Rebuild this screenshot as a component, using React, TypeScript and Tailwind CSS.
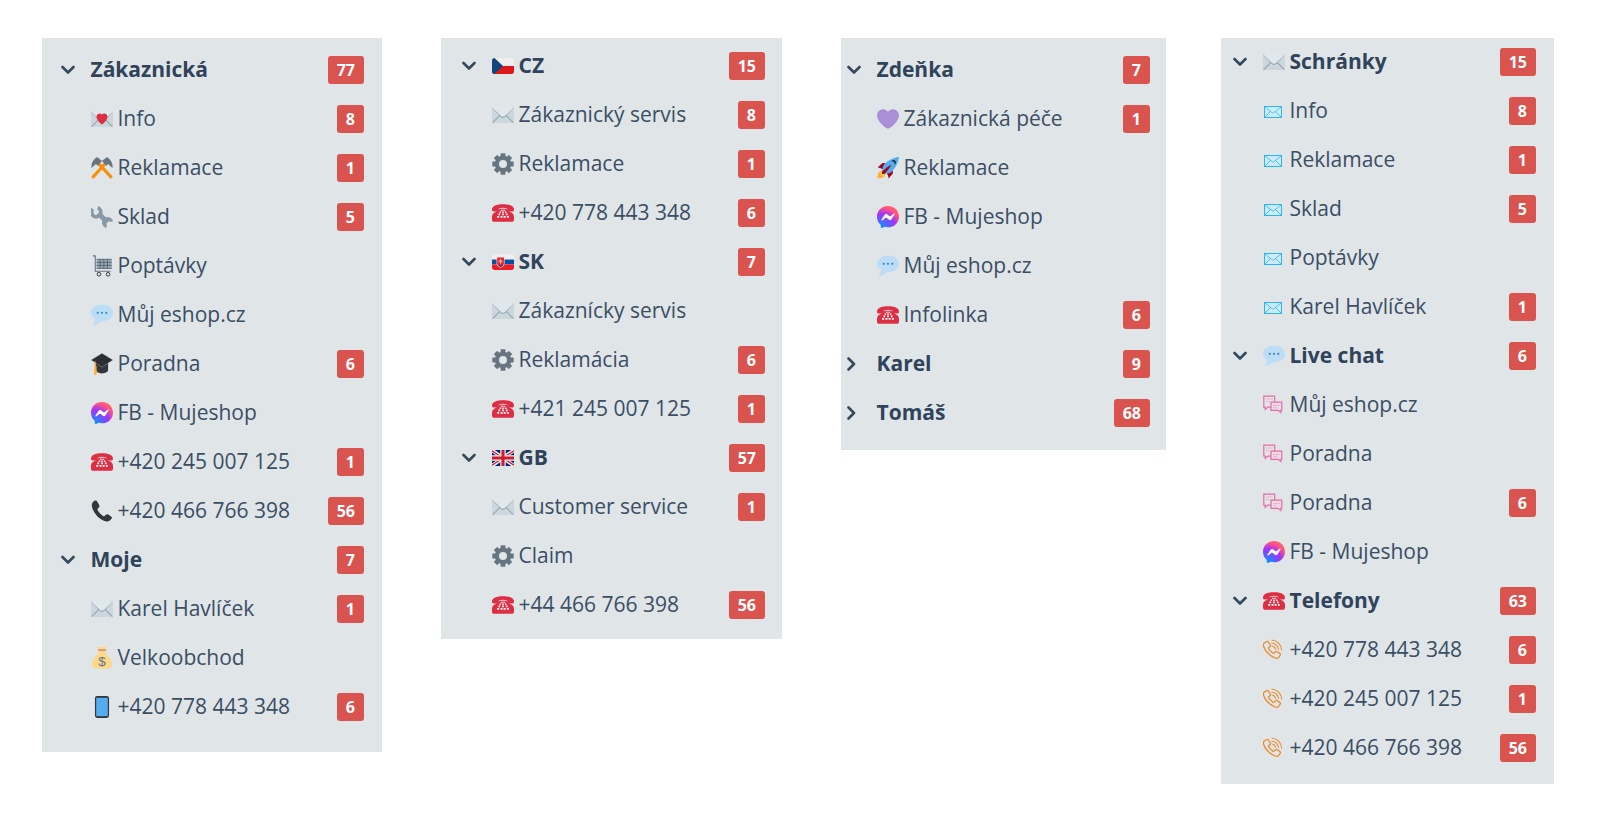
import React from "react";

const S = ({ children }: { children: React.ReactNode }) => (
  <svg viewBox="0 0 36 36" className="w-[22px] h-[22px] shrink-0 block">{children}</svg>
);

const envelopeBase = (
  <>
    <path fill="#CCD6DD" d="M36 27c0 2.2-1.8 4-4 4H4c-2.2 0-4-1.8-4-4V9c0-2.2 1.8-4 4-4h28c2.2 0 4 1.8 4 4v18z" />
    <path stroke="#99AAB5" strokeWidth="2" strokeLinecap="round" d="M13 18.5L1.5 30M23 18.5L34.5 30" />
    <path fill="#99AAB5" d="M32 5H4C2.5 5 1.2 5.9.5 7.1L14.9 21.5c1.7 1.7 4.5 1.7 6.2 0L35.5 7.1C34.8 5.9 33.5 5 32 5z" />
    <path fill="#E1E8ED" d="M32 5H4C2.5 5 1.2 5.6.5 6.1L14.9 19.5c1.7 1.7 4.5 1.7 6.2 0L35.5 6.1C34.8 5.6 33.5 5 32 5z" />
  </>
);
const Envelope = () => <S>{envelopeBase}</S>;
const LoveLetter = () => (
  <S>
    {envelopeBase}
    <path fill="#DD2E44" d="M27 14c0-2.9-2.3-5.2-5.2-5.2-1.6 0-3 .7-3.8 1.9-.9-1.2-2.3-1.9-3.8-1.9C11.3 8.8 9 11.1 9 14c0 .4.1.8.1 1.2C9.9 20 15 25 18 27c3-2 8.1-7 8.9-11.8 0-.4.1-.8.1-1.2z" />
  </S>
);
const Pick = () => (
  <S>
    <path stroke="#F4900C" strokeWidth="5" strokeLinecap="round" d="M3.500 32.500L26 8M32.500 32.500L10 8" />
    <path fill="#66757F" d="M10 0L18 6.500 11 14.500 8 11.500 1 18C-.5 10.500 3.500 4 10 0z" />
    <path fill="#66757F" d="M26 0L18 6.500 25 14.500 28 11.500 35 18C36.500 10.500 32.500 4 26 0z" />
  </S>
);
const Wrench = () => (
  <S>
    <g fill="none" stroke="#8899A6">
      <path strokeWidth="8" d="M12 12L27 27" />
      <path strokeWidth="6" d="M3 5A7.500 7.500 0 1 0 11 3" />
      <path strokeWidth="5.500" d="M33.500 25.500A6.500 6.500 0 1 0 25.500 33.500" />
    </g>
  </S>
);
const Cart = () => (
  <S>
    <path fill="none" stroke="#66757F" strokeWidth="1.800" d="M3 1.500h4v25h25" />
    <path fill="#99AAB5" d="M9 7h25v15H9z" />
    <path stroke="#4F5B66" strokeWidth="1.300" d="M9 7h25M9 12h25M9 17h25M9 22h25M15 7v15M21 7v15M27 7v15" />
    <circle cx="13" cy="31.500" r="3" fill="#E1E8ED" stroke="#31373D" strokeWidth="1.600" />
    <circle cx="28" cy="31.500" r="3" fill="#E1E8ED" stroke="#31373D" strokeWidth="1.600" />
  </S>
);
const Balloon = () => (
  <S>
    <path fill="#BBDDF5" d="M18 1C8 1 0 6.800 0 14.500c0 4 2.500 7.500 6.500 10C6.500 27.500 4 31.500 3 33c0 .9 1 1.400 2 1 5-1 9-4 11-5.900.6.100 1.400.1 2 .1 10 0 18-6 18-13.700S28 1 18 1z" />
    <circle cx="11" cy="14.500" r="1.800" fill="#3B88C3" />
    <circle cx="18" cy="14.500" r="1.800" fill="#3B88C3" />
    <circle cx="25" cy="14.500" r="1.800" fill="#3B88C3" />
  </S>
);
const Cap = () => (
  <S>
    <path fill="#31373D" d="M8 14v14c0 3 4.500 5.500 10 5.500s10-2.500 10-5.500V14H8z" />
    <path fill="#292F33" stroke="#E0E5E8" strokeWidth=".5" d="M18 .5L36 11.500 18 23 0 11.500z" />
    <path fill="none" stroke="#F4900C" strokeWidth="1.500" d="M6.500 13l.5 8" />
    <path fill="#FFAC33" d="M5.500 21h3.500l.5 13-2.500 2-2-1z" />
  </S>
);
const Messenger = ({ id }: { id: string }) => (
  <S>
    <defs>
      <radialGradient id={id} cx="0.2" cy="1" r="1.150">
        <stop offset="0" stopColor="#0099FF" />
        <stop offset="0.55" stopColor="#A033FF" />
        <stop offset="0.8" stopColor="#FF5280" />
        <stop offset="1" stopColor="#FF7061" />
      </radialGradient>
    </defs>
    <path fill={`url(#${id})`} d="M18 0C7.900 0 0 7.400 0 17.400c0 5.200 2.100 9.700 5.600 12.800.3.300.5.700.5 1.100l.1 3.200c0 1 1.100 1.700 2 1.300l3.600-1.600c.3-.1.700-.2 1-.1 1.600.5 3.400.7 5.200.7 10.100 0 18-7.400 18-17.400S28.100 0 18 0z" />
    <path fill="#fff" d="M7.200 22.600l5.300-8.400c.8-1.300 2.600-1.700 3.900-.7l4.200 3.200c.4.300.9.300 1.300 0l5.700-4.300c.8-.6 1.800.3 1.300 1.100l-5.300 8.400c-.8 1.300-2.600 1.700-3.900.7l-4.200-3.200c-.4-.3-.9-.3-1.300 0l-5.700 4.300c-.8.600-1.800-.3-1.300-1.100z" />
  </S>
);
const Telephone = () => (
  <S>
    <path fill="#DD2E44" d="M18 3.500C8 3.500 0 6 0 12.500c0 2 1 3 3 3h5c2 0 3-1 3-2.500v-2.500c4-1.500 10-1.500 14 0V13c0 1.500 1 2.500 3 2.500h5c2 0 3-1 3-3 0-6.500-8-9-18-9z" />
    <path fill="#DD2E44" d="M12 11h12c1 2 3 4 6 5.500 3 1.500 6 4 6 7.500v5c0 2-1.500 3.500-3.500 3.500h-29C1.500 32.500 0 31 0 29v-5c0-3.500 3-6 6-7.500 3-1.500 5-3.500 6-5.500z" />
    <path fill="#fff" d="M14.500 12.500h2v2h-2zM17 12.500h2v2h-2zM19.500 12.500h2v2h-2zM12.500 15.500h2.400v2.300h-2.400zM16.800 15.500h2.400v2.300h-2.400zM21.100 15.500h2.400v2.300h-2.400zM10.500 19h2.800v2.500h-2.800zM16.600 19h2.800v2.500h-2.800zM22.700 19h2.800v2.500h-2.800zM8.500 23h3.200v2.700H8.500zM14 23h3.200v2.700H14zM19 23h3.200v2.700H19zM24.300 23h3.200v2.700h-3.200z" />
  </S>
);
const Receiver = () => (
  <S>
    <path fill="#31373D" d="M9.500 1.500C7.500 0 5.300 1 4 2.300 1.500 4.800 0 8.500 2.800 15c3 7 8 13 15 17.500 5 3 9.500 3.500 12.500 1.500 2-1.500 5-4 3.500-6l-5-4c-1.500-1-3-1-4.500.3l-2 2c-.7.500-1.500.5-2.500 0-2-1.200-5-4-7.500-7.500-1.500-2.500-2-3.500-1.500-4.500l2-2c1.200-1.300 1.500-2.700.6-4.200L9.500 1.500z" />
  </S>
);
const MoneyBag = () => (
  <S>
    <path fill="#FDD888" d="M13 10C7 15 1.500 23 1.500 29c0 4 3 6 7 6h19c4 0 7-2 7-6 0-6-5.500-14-11.500-19z" />
    <path fill="#FDD888" d="M11 0h14l-2 10H13z" />
    <path stroke="#BF6952" strokeWidth="1.600" d="M11.500 5h13" />
    <text x="18" y="31" textAnchor="middle" fontSize="22" fill="#67757F" fontFamily="Liberation Sans, sans-serif">$</text>
  </S>
);
const Mobile = () => (
  <S>
    <rect x="6.500" y="0" width="23" height="36" rx="3.500" fill="#31373D" />
    <rect x="8.500" y="3" width="19" height="30" fill="#55ACEE" />
  </S>
);
const FlagCZ = () => (
  <S>
    <path fill="#EEE" d="M32 5H4C1.800 5 0 6.800 0 9v9h36V9c0-2.200-1.800-4-4-4z" />
    <path fill="#DC1818" d="M0 18v9c0 2.200 1.800 4 4 4h28c2.200 0 4-1.800 4-4v-9H0z" />
    <path fill="#11457E" d="M1.200 29.800C1.900 30.500 2.900 31 4 31h.1L18 18 4 5C2.900 5 1.900 5.500 1.200 6.200.4 7 0 8 0 9v18c0 1 .4 2 1.200 2.800z" />
  </S>
);
const FlagSK = () => (
  <S>
    <path fill="#EEE" d="M32 5H4C1.800 5 0 6.800 0 9v5h36V9c0-2.200-1.800-4-4-4z" />
    <path fill="#0B4EA2" d="M0 14h36v8H0z" />
    <path fill="#EE1C25" d="M0 22v5c0 2.200 1.800 4 4 4h28c2.200 0 4-1.800 4-4v-5H0z" />
    <g transform="translate(3.500 0.500)">
      <path fill="#EEE" d="M4 9h13v11c0 4-3.500 5.500-6.500 7C7.500 25.500 4 24 4 20z" />
      <path fill="#EE1C25" d="M5 10h11v10c0 3-3 4.300-5.500 5.800C8 24.300 5 23 5 20z" />
      <path fill="#EEE" d="M10 12h1v2.200h2.200v1H11v1.600h2.800v1H11V21h-1v-3.200H7.200v-1H10v-1.600H7.800v-1H10z" />
      <path fill="#0B4EA2" d="M6.500 23.500c1-1.500 2.500-1 4-.3 1.500-.7 3-1.200 4 .3-1.500 1.200-2.800 1.800-4 2.300-1.200-.5-2.500-1.100-4-2.300z" />
    </g>
  </S>
);
const FlagGB = () => (
  <S>
    <path fill="#00247D" d="M4 5C1.800 5 0 6.800 0 9v18c0 2.200 1.800 4 4 4h28c2.200 0 4-1.800 4-4V9c0-2.200-1.800-4-4-4z" />
    <path fill="none" stroke="#EEE" strokeWidth="6" d="M1 6l34 24M35 6L1 30" />
    <path fill="none" stroke="#CF1B2B" strokeWidth="2" d="M0 6l36 24M36 6L0 30" />
    <path fill="#EEE" d="M0 13.500h13.500V5h9v8.500H36v9H22.500V31h-9v-8.500H0z" />
    <path fill="#CF1B2B" d="M0 15.500h15.500V5h5v10.500H36v5H20.500V31h-5V20.500H0z" />
  </S>
);
const Gear = () => (
  <S>
    <circle cx="18" cy="18" r="10" fill="none" stroke="#66757F" strokeWidth="7" />
    {[0, 45, 90, 135, 180, 225, 270, 315].map((a) => (
      <rect key={a} x="14" y="0.500" width="8" height="7.500" rx="1" fill="#66757F" transform={`rotate(${a} 18 18)`} />
    ))}
  </S>
);
const PurpleHeart = () => (
  <S>
    <path fill="#AA8ED6" d="M35.900 11.800c0-5.450-4.420-9.870-9.870-9.870-3.310 0-6.230 1.630-8.020 4.130-1.790-2.500-4.710-4.130-8.020-4.130C4.540 1.930.12 6.350.12 11.800c0 .77.1 1.520.27 2.240C1.750 22.590 11.220 31.570 18 34.030c6.780-2.460 16.250-11.440 17.620-19.960.17-.72.27-1.470.27-2.240z" />
  </S>
);
const Rocket = () => (
  <S>
    <path fill="#A0041E" d="M1 17l8-7 16 1 1 16-7 8s.001-5.999-6-12-12-6-12-6z" />
    <path fill="#FFAC33" d="M.973 35s-.036-7.979 2.985-11S15 21.187 15 21.187 14.999 29 11.999 32c-3 3-11.026 3-11.026 3z" />
    <circle fill="#FFCC4D" cx="8.999" cy="27" r="4" />
    <path fill="#55ACEE" d="M35.999 0s-10 0-22 10c-6 5-6 14-4 16s11 2 16-4c10-12 10-22 10-22z" />
    <path fill="#1F2937" d="M26.999 5c-1.623 0-3.013.971-3.641 2.360.502-.227 1.055-.36 1.641-.36 2.209 0 4 1.791 4 4 0 .586-.133 1.139-.359 1.640 1.389-.627 2.359-2.017 2.359-3.640 0-2.209-1.791-4-4-4z" />
    <path fill="#A0041E" d="M8 28s0-4 1-5 13.001-10.999 14-10-9.001 13-10.001 14S8 28 8 28z" />
  </S>
);
const MailLine = () => (
  <svg viewBox="0 0 22 22" className="w-[22px] h-[22px] shrink-0 block">
    <rect x="1.500" y="6.500" width="17" height="11" fill="#CDEBF7" stroke="#29B6F6" />
    <path fill="none" stroke="#29B6F6" strokeWidth=".8" d="M2 7l6.800 5.500c.8.600 1.600.6 2.400 0L18 7M2 17l5.700-5.700M18 17l-5.700-5.700" />
  </svg>
);
const ChatLine = () => (
  <svg viewBox="0 0 22 22" className="w-[22px] h-[22px] shrink-0 block" fill="none" stroke="#E76BA8" strokeWidth="1.200">
    <path d="M.8 2.200h10.900v10.900H4.800L2.200 15.500v-2.400H.8z" />
    <path d="M8 8.200h10.800v8.200h-1v2.100l-2.600-2.100H8z" fill="#EBDDE6" />
    <path stroke="#EFA9CC" strokeWidth=".9" d="M2.800 5h7M2.800 7.500h3.500M10 11.500h6.800M10 13.800h4" />
  </svg>
);
const PhoneLine = () => (
  <svg viewBox="0 0 22 22" className="w-[22px] h-[22px] shrink-0 block" fill="none" stroke="#EE8A26" strokeWidth="1.300">
    <path transform="translate(-1.200 -1)" d="M5 3.500L2.500 5c-1 .8-1.200 2-.7 3.500C3.500 13.500 8.500 18.500 13.500 20c1.500.5 2.800.3 3.500-.7L18.500 17c.3-.5.2-1-.3-1.400L15 13.500c-.5-.3-1-.2-1.400.2L12.500 15c-.5.4-1 .4-1.500.1C9.500 14 8 12.500 7 11c-.3-.5-.3-1 .1-1.500l1.300-1.100c.4-.4.5-.9.200-1.400L6.400 3.800C6 3.300 5.500 3.200 5 3.500z" />
    <path strokeWidth="1.100" d="M8.500 1c5.500.2 10 4.500 10.200 10.500M8.500 4c3.800.2 6.800 3.200 7 7M8.800 7c1.800.2 3.500 1.800 3.700 3.700" />
  </svg>
);

const Chevron = ({ open = true }: { open?: boolean }) => (
  <svg viewBox="0 0 14 14" className="w-[14px] h-[14px] block" fill="none" stroke="#34495E" strokeWidth="2.600" strokeLinecap="round" strokeLinejoin="round">
    {open ? <path d="M1.500 4l5.500 5.500L12.500 4" /> : <path d="M1.500 1.500L7 7 1.500 12.500" />}
  </svg>
);

const Badge = ({ n }: { n?: number }) =>
  n === undefined ? null : (
    <span className="ml-auto h-[28px] min-w-[27px] px-[9px] rounded-[3px] bg-[#D9534F] text-white text-[16px] font-bold flex items-center justify-center leading-none">
      {n}
    </span>
  );

type Row = { head?: boolean; closed?: boolean; icon?: React.ReactNode; label: string; n?: number };

const Panel = ({ rows, className }: { rows: Row[]; className: string }) => (
  <div className={`bg-[#E0E5E8] shrink-0 flex flex-col ${className}`}>
    {rows.map((r, i) => (
      <div key={i} className={`h-[49px] shrink-0 flex items-center ${r.head ? "font-bold text-[#2F435A]" : "text-[#3A4E64]"}`}>
        <span className="w-[29.5px] shrink-0">{r.head && <Chevron open={!r.closed} />}</span>
        {r.icon && <span className="ml-[0.5px] mr-[4.5px] shrink-0">{r.icon}</span>}
        <span className="whitespace-nowrap">{r.label}</span>
        <Badge n={r.n} />
      </div>
    ))}
  </div>
);

const p1: Row[] = [
  { head: true, label: "Zákaznická", n: 77 },
  { icon: <LoveLetter />, label: "Info", n: 8 },
  { icon: <Pick />, label: "Reklamace", n: 1 },
  { icon: <Wrench />, label: "Sklad", n: 5 },
  { icon: <Cart />, label: "Poptávky" },
  { icon: <Balloon />, label: "Můj eshop.cz" },
  { icon: <Cap />, label: "Poradna", n: 6 },
  { icon: <Messenger id="m1" />, label: "FB - Mujeshop" },
  { icon: <Telephone />, label: "+420 245 007 125", n: 1 },
  { icon: <Receiver />, label: "+420 466 766 398", n: 56 },
  { head: true, label: "Moje", n: 7 },
  { icon: <Envelope />, label: "Karel Havlíček", n: 1 },
  { icon: <MoneyBag />, label: "Velkoobchod" },
  { icon: <Mobile />, label: "+420 778 443 348", n: 6 },
];
const p2: Row[] = [
  { head: true, icon: <FlagCZ />, label: "CZ", n: 15 },
  { icon: <Envelope />, label: "Zákaznický servis", n: 8 },
  { icon: <Gear />, label: "Reklamace", n: 1 },
  { icon: <Telephone />, label: "+420 778 443 348", n: 6 },
  { head: true, icon: <FlagSK />, label: "SK", n: 7 },
  { icon: <Envelope />, label: "Zákaznícky servis" },
  { icon: <Gear />, label: "Reklamácia", n: 6 },
  { icon: <Telephone />, label: "+421 245 007 125", n: 1 },
  { head: true, icon: <FlagGB />, label: "GB", n: 57 },
  { icon: <Envelope />, label: "Customer service", n: 1 },
  { icon: <Gear />, label: "Claim" },
  { icon: <Telephone />, label: "+44 466 766 398", n: 56 },
];
const p3: Row[] = [
  { head: true, label: "Zdeňka", n: 7 },
  { icon: <PurpleHeart />, label: "Zákaznická péče", n: 1 },
  { icon: <Rocket />, label: "Reklamace" },
  { icon: <Messenger id="m2" />, label: "FB - Mujeshop" },
  { icon: <Balloon />, label: "Můj eshop.cz" },
  { icon: <Telephone />, label: "Infolinka", n: 6 },
  { head: true, closed: true, label: "Karel", n: 9 },
  { head: true, closed: true, label: "Tomáš", n: 68 },
];
const p4: Row[] = [
  { head: true, icon: <Envelope />, label: "Schránky", n: 15 },
  { icon: <MailLine />, label: "Info", n: 8 },
  { icon: <MailLine />, label: "Reklamace", n: 1 },
  { icon: <MailLine />, label: "Sklad", n: 5 },
  { icon: <MailLine />, label: "Poptávky" },
  { icon: <MailLine />, label: "Karel Havlíček", n: 1 },
  { head: true, icon: <Balloon />, label: "Live chat", n: 6 },
  { icon: <ChatLine />, label: "Můj eshop.cz" },
  { icon: <ChatLine />, label: "Poradna" },
  { icon: <ChatLine />, label: "Poradna", n: 6 },
  { icon: <Messenger id="m3" />, label: "FB - Mujeshop" },
  { head: true, icon: <Telephone />, label: "Telefony", n: 63 },
  { icon: <PhoneLine />, label: "+420 778 443 348", n: 6 },
  { icon: <PhoneLine />, label: "+420 245 007 125", n: 1 },
  { icon: <PhoneLine />, label: "+420 466 766 398", n: 56 },
];

export default function App() {
  return (
    <div className="min-h-[829px] bg-white pl-[42px] pt-[38px] flex items-start text-[21px] font-['Open_Sans',sans-serif]">
      <Panel rows={p1} className="w-[340px] pl-[19px] pr-[18px] pt-[7.5px] pb-[20.5px]" />
      <Panel rows={p2} className="w-[341px] ml-[59px] pl-[21px] pr-[17px] pt-[3.5px] pb-[9.5px]" />
      <Panel rows={p3} className="w-[325px] ml-[59px] pl-[6px] pr-[16px] pt-[7.5px] pb-[12.5px]" />
      <Panel rows={p4} className="w-[333px] ml-[55px] pl-[12px] pr-[18px] pb-[11.5px] [&>*:first-child]:-mt-[0.5px]" />
    </div>
  );
}
